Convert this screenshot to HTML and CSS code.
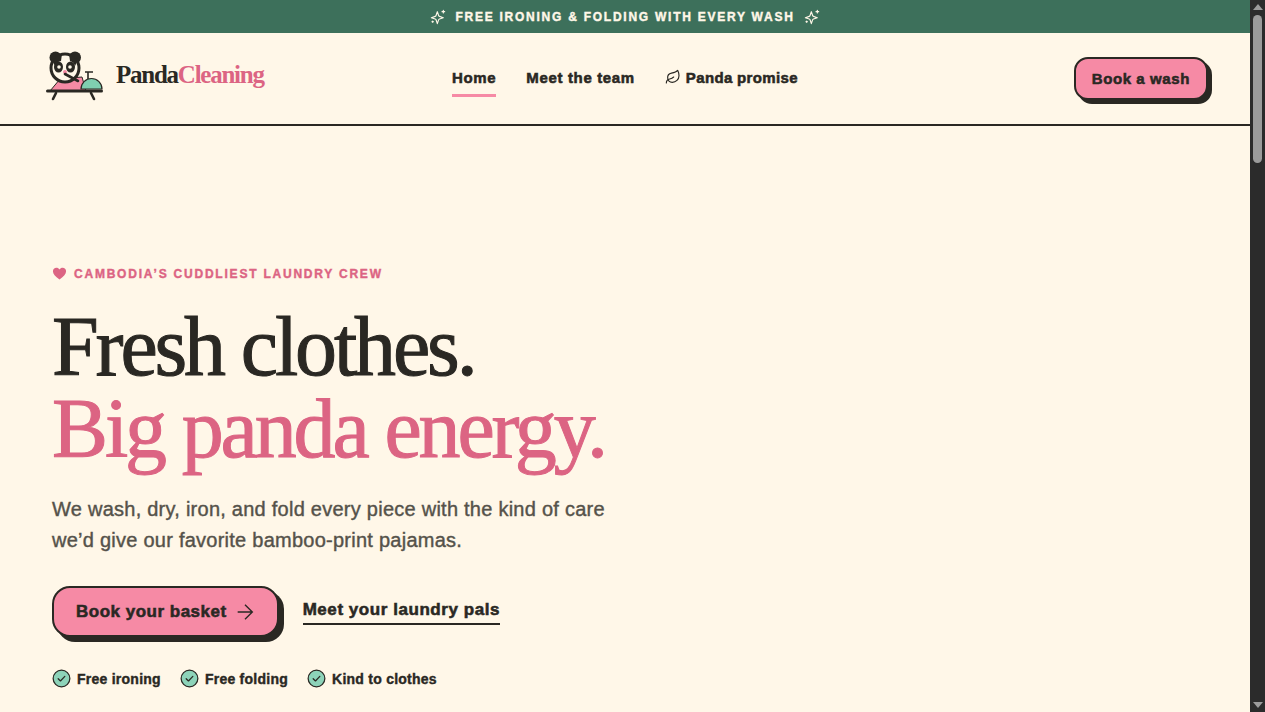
FILE: index.html
```html
<!DOCTYPE html>
<html lang="en">
<head>
    <meta charset="UTF-8">
    <meta name="viewport" content="width=device-width, initial-scale=1.0">
    <title>Panda Cleaning</title>
    <link rel="stylesheet" href="styles.css">
</head>
<body>
    <div class="page">
        <div class="promo">
            <svg class="promo-icon" viewBox="0 0 24 24"><path d="M11 4l1.900 5.800a2 2 0 0 0 1.300 1.300L20 13l-5.800 1.900a2 2 0 0 0-1.300 1.300L11 22l-1.900-5.800a2 2 0 0 0-1.300-1.300L2 13l5.800-1.900a2 2 0 0 0 1.300-1.300z"/><path d="M20 2v4M22 4h-4M4 18v2M5 19H3"/></svg>
            <span>FREE IRONING &amp; FOLDING WITH EVERY WASH</span>
            <svg class="promo-icon" viewBox="0 0 24 24"><path d="M11 4l1.900 5.800a2 2 0 0 0 1.300 1.300L20 13l-5.800 1.900a2 2 0 0 0-1.300 1.300L11 22l-1.900-5.800a2 2 0 0 0-1.300-1.300L2 13l5.800-1.900a2 2 0 0 0 1.300-1.300z"/><path d="M20 2v4M22 4h-4M4 18v2M5 19H3"/></svg>
        </div>
        <header class="site-header">
            <a class="logo" href="#">
                <svg class="logo-mark" viewBox="0 0 58 52">
                    <path d="M4 41l10-12 22-2 4 14z" fill="#f68aa5" stroke="#2a2823" stroke-width="1"/>
                    <circle cx="9.500" cy="7.500" r="6" fill="#2a2823"/>
                    <circle cx="29" cy="7.500" r="6" fill="#2a2823"/>
                    <circle cx="19" cy="18" r="14" fill="#fff8e9" stroke="#2a2823" stroke-width="3"/>
                    <path d="M7 12q3-7 9-8l-1 7q-5 1-6 5zM31 12q-3-7-8-8l1 7q4 1 5 5z" fill="#2a2823"/>
                    <ellipse cx="12.500" cy="17" rx="4.500" ry="5.500" fill="#2a2823"/>
                    <ellipse cx="24.500" cy="17" rx="4.500" ry="5.500" fill="#2a2823"/>
                    <circle cx="13" cy="17" r="1.800" fill="#fff8e9"/>
                    <circle cx="24" cy="17" r="1.800" fill="#fff8e9"/>
                    <circle cx="19" cy="22" r="2" fill="#f68aa5"/>
                    <path d="M19 24l13 7" fill="none" stroke="#2a2823" stroke-width="2.600" stroke-linecap="round"/>
                    <path d="M35 39a10.500 10.500 0 0 1 21 0z" fill="#7fcfb0" stroke="#2a2823" stroke-width="1.200"/>
                    <path d="M42 29v-7M39 22h8" fill="none" stroke="#2a2823" stroke-width="1.600"/>
                    <path d="M1.500 41h54" stroke="#2a2823" stroke-width="3" stroke-linecap="round"/>
                    <path d="M10 43l-3 6M45 43l3 6" stroke="#2a2823" stroke-width="2.600" stroke-linecap="round"/>
                </svg>
                <span class="logo-text">Panda<em>Cleaning</em></span>
            </a>
            <nav class="main-nav">
                <a class="active" href="#">Home</a>
                <a href="#">Meet the team</a>
                <a class="nav-promise" href="#">
                    <svg viewBox="0 0 24 24"><path d="M11 20A7 7 0 0 1 9.800 6.100C15.500 5 17 4.480 19 2c1 2 2 4.180 2 8 0 5.500-4.780 10-10 10z"/><path d="M2 21c0-3 1.850-5.360 5.080-6C9.500 14.520 12 13 13 12"/></svg>
                    Panda promise
                </a>
            </nav>
            <div class="header-cta"><a class="btn btn-small" href="#">Book a wash</a></div>
        </header>
        <main class="hero">
            <p class="eyebrow">
                <svg viewBox="0 0 24 24"><path d="M12 21.500C5 16 1.500 12.500 1.500 8.200 1.500 5 4 2.800 7 2.800c2 0 3.900 1 5 2.800 1.100-1.800 3-2.800 5-2.800 3 0 5.500 2.200 5.500 5.400 0 4.300-3.500 7.800-10.500 13.300z"/></svg>
                CAMBODIA’S CUDDLIEST LAUNDRY CREW
            </p>
            <h1>Fresh clothes.<br><span>Big panda energy.</span></h1>
            <p class="lead">We wash, dry, iron, and fold every piece with the kind of care we’d give our favorite bamboo-print pajamas.</p>
            <div class="actions">
                <a class="btn btn-large" href="#">
                    Book your basket
                    <svg viewBox="0 0 24 24"><path d="M4 12h16M12 4l8 8-8 8"/></svg>
                </a>
                <a class="link-underline" href="#">Meet your laundry pals</a>
            </div>
            <ul class="perks">
                <li><svg viewBox="0 0 20 20"><circle cx="10" cy="10" r="8.800"/><path d="M6.500 10.200l2.400 2.400 4.600-4.800"/></svg>Free ironing</li>
                <li><svg viewBox="0 0 20 20"><circle cx="10" cy="10" r="8.800"/><path d="M6.500 10.200l2.400 2.400 4.600-4.800"/></svg>Free folding</li>
                <li><svg viewBox="0 0 20 20"><circle cx="10" cy="10" r="8.800"/><path d="M6.500 10.200l2.400 2.400 4.600-4.800"/></svg>Kind to clothes</li>
            </ul>
        </main>
    </div>
    <div class="scrollbar">
        <span class="arrow-up"></span>
        <span class="thumb"></span>
        <span class="arrow-down"></span>
    </div>
</body>
</html>
```

FILE: styles.css
```css
body {
    margin: 0;
    height: 100vh;
    overflow: hidden;
    display: flex;
    font-family: "Liberation Sans", Arial, sans-serif;
    background-color: #fff7e8;
    color: #2a2823;
}
a {
    color: inherit;
    text-decoration: none;
}
.page {
    flex: 1;
    min-width: 0;
}
.scrollbar {
    width: 15px;
    flex: none;
    background: #2b2b2b;
    display: flex;
    flex-direction: column;
    align-items: center;
    padding: 4px 0;
    box-sizing: border-box;
}
.thumb {
    width: 9px;
    height: 148px;
    margin-top: 5px;
    border-radius: 5px;
    background: #9b9b9b;
}
.arrow-up,
.arrow-down {
    width: 0;
    height: 0;
    border-left: 5px solid transparent;
    border-right: 5px solid transparent;
}
.arrow-up {
    border-bottom: 6px solid #9b9b9b;
}
.arrow-down {
    margin-top: auto;
    border-top: 6px solid #9b9b9b;
}
.promo {
    height: 33px;
    display: flex;
    align-items: center;
    justify-content: center;
    gap: 9px;
    background: #3d705b;
    color: #fff7e8;
    font-size: 12px;
    font-weight: 700;
    letter-spacing: 1.75px;
    -webkit-text-stroke: 0.4px #fff7e8;
}
.promo-icon {
    width: 16px;
    height: 16px;
    fill: none;
    stroke: #fff7e8;
    stroke-width: 1.7;
    stroke-linecap: round;
    stroke-linejoin: round;
}
.site-header {
    height: 91px;
    padding: 0 42px;
    display: grid;
    grid-template-columns: 1fr auto 1fr;
    align-items: center;
    border-bottom: 2px solid #2a2823;
}
.logo {
    display: flex;
    align-items: center;
    gap: 12px;
    margin-left: 4px;
    padding-bottom: 5px;
}
.logo-mark {
    width: 58px;
    height: 52px;
    flex: none;
}
.logo-text {
    font-family: "Liberation Serif", serif;
    font-size: 25px;
    font-weight: 700;
    letter-spacing: -1.25px;
    padding-bottom: 3px;
}
.logo-text em {
    font-style: normal;
    color: #dc6483;
}
.main-nav {
    display: flex;
    align-items: center;
    gap: 30px;
    font-size: 15px;
    font-weight: 700;
    letter-spacing: 0.65px;
    -webkit-text-stroke: 0.55px #2a2823;
}
.main-nav a {
    padding: 8px 0;
    border-bottom: 3px solid transparent;
}
.main-nav a.active {
    border-bottom-color: #f68aa5;
}
.main-nav .nav-promise {
    display: flex;
    align-items: center;
    gap: 5px;
    letter-spacing: 0.35px;
}
.nav-promise svg {
    width: 16px;
    height: 16px;
    fill: none;
    stroke: #2a2823;
    stroke-width: 1.700;
    stroke-linecap: round;
    stroke-linejoin: round;
}
.header-cta {
    display: flex;
    justify-content: flex-end;
    padding-bottom: 1px;
}
.btn {
    display: inline-flex;
    align-items: center;
    background: #f68aa5;
    border: 2px solid #2a2823;
    font-weight: 700;
    -webkit-text-stroke: 0.55px #2a2823;
    letter-spacing: 0.6px;
}
.btn-small {
    height: 39px;
    padding: 0 16px;
    border-radius: 14px;
    font-size: 15px;
    box-shadow: 4px 4px 0 #2a2823;
}
.hero {
    padding: 140px 52px 0;
}
.eyebrow {
    margin: 0;
    display: flex;
    align-items: center;
    gap: 7px;
    font-size: 12px;
    font-weight: 700;
    letter-spacing: 1.78px;
    color: #dc6483;
    -webkit-text-stroke: 0.4px #dc6483;
}
.eyebrow svg {
    width: 15px;
    height: 15px;
    fill: #dc6483;
}
h1 {
    margin: 25px 0 0;
    font-family: "Liberation Serif", serif;
    font-size: 84px;
    line-height: 82px;
    font-weight: 400;
    letter-spacing: -3.15px;
    -webkit-text-stroke: 1px currentColor;
}
h1 span {
    color: #dc6483;
}
.lead {
    margin: 24px 0 0;
    width: 570px;
    font-size: 20px;
    line-height: 31px;
    letter-spacing: 0.25px;
    color: #55524a;
    -webkit-text-stroke: 0.4px #55524a;
}
.actions {
    margin-top: 30px;
    display: flex;
    align-items: center;
    gap: 24px;
}
.btn-large {
    height: 47px;
    padding: 0 21px 0 22px;
    gap: 7px;
    border-radius: 18px;
    font-size: 17px;
    letter-spacing: 0.5px;
    box-shadow: 5px 5px 0 #2a2823;
}
.btn-large svg {
    width: 22px;
    height: 22px;
    fill: none;
    stroke: #2a2823;
    stroke-width: 1.500;
}
.link-underline {
    margin-top: 2px;
    padding-bottom: 3px;
    border-bottom: 2px solid #2a2823;
    font-size: 17px;
    font-weight: 700;
    letter-spacing: 0.55px;
    -webkit-text-stroke: 0.55px #2a2823;
}
.perks {
    list-style: none;
    margin: 32px 0 0;
    padding: 0;
    display: flex;
    gap: 19px;
    font-size: 14px;
    font-weight: 700;
    letter-spacing: 0.25px;
    -webkit-text-stroke: 0.4px #2a2823;
}
.perks li {
    display: flex;
    align-items: center;
    gap: 6px;
}
.perks svg {
    width: 19px;
    height: 19px;
    fill: #8dd3b9;
    stroke: #2a2823;
    stroke-width: 1.300;
    stroke-linecap: round;
    stroke-linejoin: round;
}
```
